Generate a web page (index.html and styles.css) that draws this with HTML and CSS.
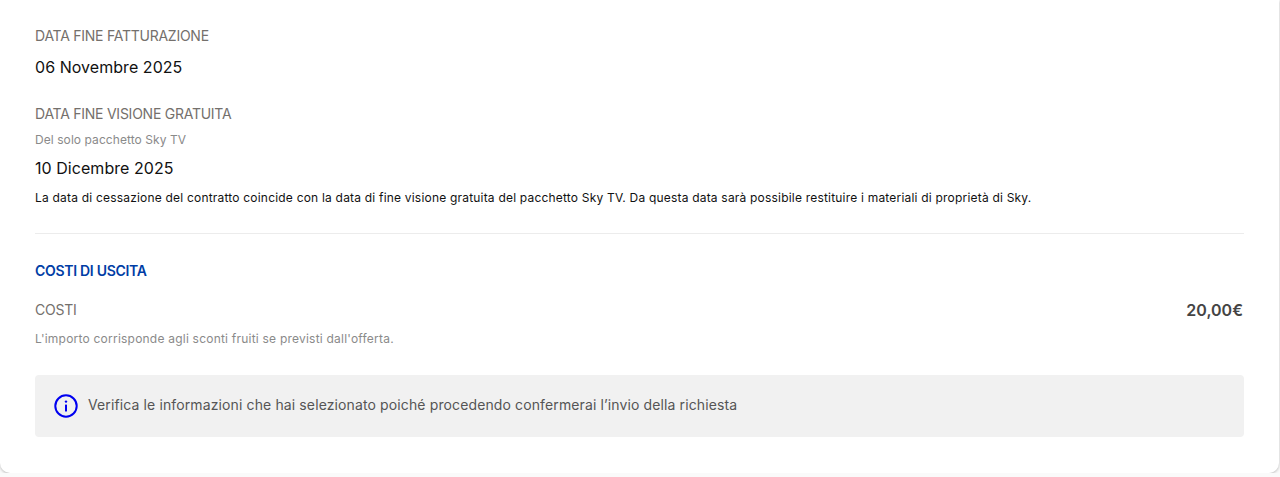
FILE: index.html
```html
<!DOCTYPE html>
<html lang="it">
<head>
    <meta charset="UTF-8">
    <title>Riepilogo disdetta</title>
    <link rel="stylesheet" href="styles.css">
</head>
<body>
    <div class="card">
        <div class="field">
            <p class="label">DATA FINE FATTURAZIONE</p>
            <p class="value">06 Novembre 2025</p>
        </div>

        <div class="field second">
            <p class="label">DATA FINE VISIONE GRATUITA</p>
            <p class="hint">Del solo pacchetto Sky TV</p>
            <p class="value small-gap">10 Dicembre 2025</p>
            <p class="note">La data di cessazione del contratto coincide con la data di fine visione gratuita del pacchetto Sky TV. Da questa data sarà possibile restituire i materiali di proprietà di Sky.</p>
        </div>

        <hr class="divider">

        <h3 class="section-title">COSTI DI USCITA</h3>

        <div class="cost-row">
            <span class="label">COSTI</span>
            <span class="price">20,00€</span>
        </div>
        <p class="hint cost-hint">L'importo corrisponde agli sconti fruiti se previsti dall'offerta.</p>

        <div class="notice">
            <svg class="info-icon" viewBox="0 0 24 24" width="24" height="24" fill="none">
                <circle cx="12" cy="12" r="10.7" stroke="#0000f0" stroke-width="2"/>
                <circle cx="12" cy="7.6" r="1.2" fill="#0000f0"/>
                <rect x="11" y="10.4" width="2" height="7.2" rx="0.6" fill="#0000f0"/>
            </svg>
            <span class="notice-text">Verifica le informazioni che hai selezionato poiché procedendo confermerai l’invio della richiesta</span>
        </div>
    </div>
</body>
</html>
```

FILE: styles.css
```css
body {
    margin: 0;
    background: #fafafa;
    font-family: 'Inter', 'Open Sans', sans-serif;
    color: #111;
}

p {
    margin: 0;
}

.card {
    background: #ffffff;
    height: 473px;
    box-sizing: border-box;
    margin-right: 1px;
    padding: 26px 35px 0 35px;
    border-radius: 0 0 10px 10px;
    box-shadow: 0 1px 3px rgba(0, 0, 0, 0.25);
}

.label {
    font-size: 14px;
    line-height: 20px;
    letter-spacing: -0.25px;
    color: #74706c;
}

.value {
    font-size: 16px;
    line-height: 24px;
    letter-spacing: 0.05px;
    margin-top: 9px;
    color: #111;
}

.small-gap {
    margin-top: 8px;
}

.second {
    margin-top: 25px;
}

.hint {
    font-size: 12px;
    line-height: 16px;
    letter-spacing: 0.07px;
    color: #8a8a8a;
    margin-top: 8px;
}

.note {
    font-size: 12px;
    line-height: 16px;
    letter-spacing: 0.2px;
    margin-top: 10px;
    color: #111;
}

.divider {
    border: none;
    border-top: 1px solid #ececec;
    margin: 27px 0 0;
}

.section-title {
    font-size: 14px;
    line-height: 20px;
    font-weight: 600;
    letter-spacing: -0.3px;
    color: #003da5;
    margin: 27px 0 0;
}

.cost-row {
    display: flex;
    justify-content: space-between;
    align-items: center;
    margin-top: 19px;
}

.price {
    font-size: 16px;
    font-weight: 600;
    color: #444;
    margin-right: 1px;
}

.cost-hint {
    margin-top: 11px;
    letter-spacing: 0.22px;
}

.notice {
    display: flex;
    align-items: center;
    gap: 10px;
    height: 62px;
    box-sizing: border-box;
    padding-left: 19px;
    margin-top: 28px;
    background: #f1f1f1;
    border-radius: 4px;
    font-size: 14px;
    letter-spacing: 0.12px;
    color: #555;
}

.notice-text {
    padding-bottom: 3px;
}

.info-icon {
    flex-shrink: 0;
}
```
